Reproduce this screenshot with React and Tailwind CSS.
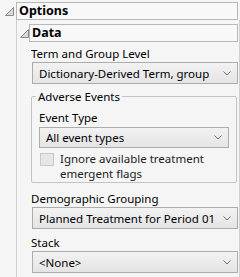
import React from "react";

const Tri = () => (
  <svg width="9" height="9" viewBox="0 0 9 9" className="block">
    <polygon points="8.5,0.5 8.5,8.5 0.5,8.5" fill="#d8d8d8" stroke="#8a8a8a" strokeWidth="1" />
  </svg>
);

const Chevron = () => (
  <svg width="8" height="5" viewBox="0 0 8 5" className="block">
    <polyline points="0.5,0.5 4,4 7.5,0.5" fill="none" stroke="#707070" strokeWidth="1" />
  </svg>
);

const Select = ({ text, className = "", gap = "ml-2" }) => (
  <div
    className={`flex items-center justify-between border border-[#acacac] bg-gradient-to-b from-[#f2f2f2] to-[#e4e4e4] pl-[6px] pr-[6px] overflow-hidden ${className}`}
  >
    <span className="whitespace-nowrap overflow-hidden">{text}</span>
    <span className={`${gap} shrink-0`}>
      <Chevron />
    </span>
  </div>
);

export default function App() {
  return (
    <div
      className="w-[240px] h-[277px] bg-[#f5f5f5] overflow-hidden text-[11.5px] leading-[15px] text-black"
      style={{ fontFamily: '"Noto Sans", "Open Sans", sans-serif' }}
    >
      <div className="flex items-center pt-[2px] h-[20px]">
        <div className="w-[16px] flex justify-center pl-[2px] pt-[1px]">
          <Tri />
        </div>
        <div className="flex-1 mr-[2px] h-[18px] border border-[#b8b8b8] bg-[#f8f8f8] font-bold text-[12.5px] leading-[16px] pl-[2px]">
          Options
        </div>
      </div>
      <div className="ml-[16px] w-[224px] border-l border-r border-[#d0d0d0] h-[257px]">
        <div className="flex items-center pt-[4px] h-[22px]">
          <div className="w-[12px] flex justify-center pl-[2px] pt-[1px]">
            <Tri />
          </div>
          <div className="flex-1 mr-[1px] h-[18px] border border-[#b8b8b8] bg-[#f8f8f8] font-bold text-[12.5px] leading-[16px] pl-[2px]">
            Data
          </div>
        </div>
        <div className="pl-[15px] pr-[1px] pt-[4px]">
          <div className="pb-[1px] -ml-[1px]">Term and Group Level</div>
          <Select text="Dictionary-Derived Term, grouped by Dictionary-Derived Body System" className="h-[22px]" gap="ml-[14px]" />
          <div className="relative mt-[12px] mr-[1px] -ml-[1px] border border-[#c4c4c4] rounded-[2px] px-[7px] pb-[1px]">
            <div className="absolute -top-[8px] left-[4px] bg-[#f5f5f5] px-[2px] leading-[15px]">Adverse Events</div>
            <div className="pt-[13px] pb-[2px]">Event Type</div>
            <Select text="All event types" className="h-[21px]" />
            <div className="flex mt-[3px]">
              <div className="w-[14px] h-[13px] border border-[#c8c8c8] bg-[#e6e6e6] shrink-0 mt-[2px] ml-[1px]" />
              <div className="ml-[6px] text-[#222]">
                <div>Ignore available treatment</div>
                <div>emergent flags</div>
              </div>
            </div>
          </div>
          <div className="pt-[8px] pb-[1px] -ml-[1px]">Demographic Grouping</div>
          <Select text="Planned Treatment for Period 01" className="h-[22px]" />
          <div className="pt-[6px] pb-[1px] -ml-[1px]">Stack</div>
          <Select text="<None>" className="h-[22px]" />
        </div>
      </div>
    </div>
  );
}
